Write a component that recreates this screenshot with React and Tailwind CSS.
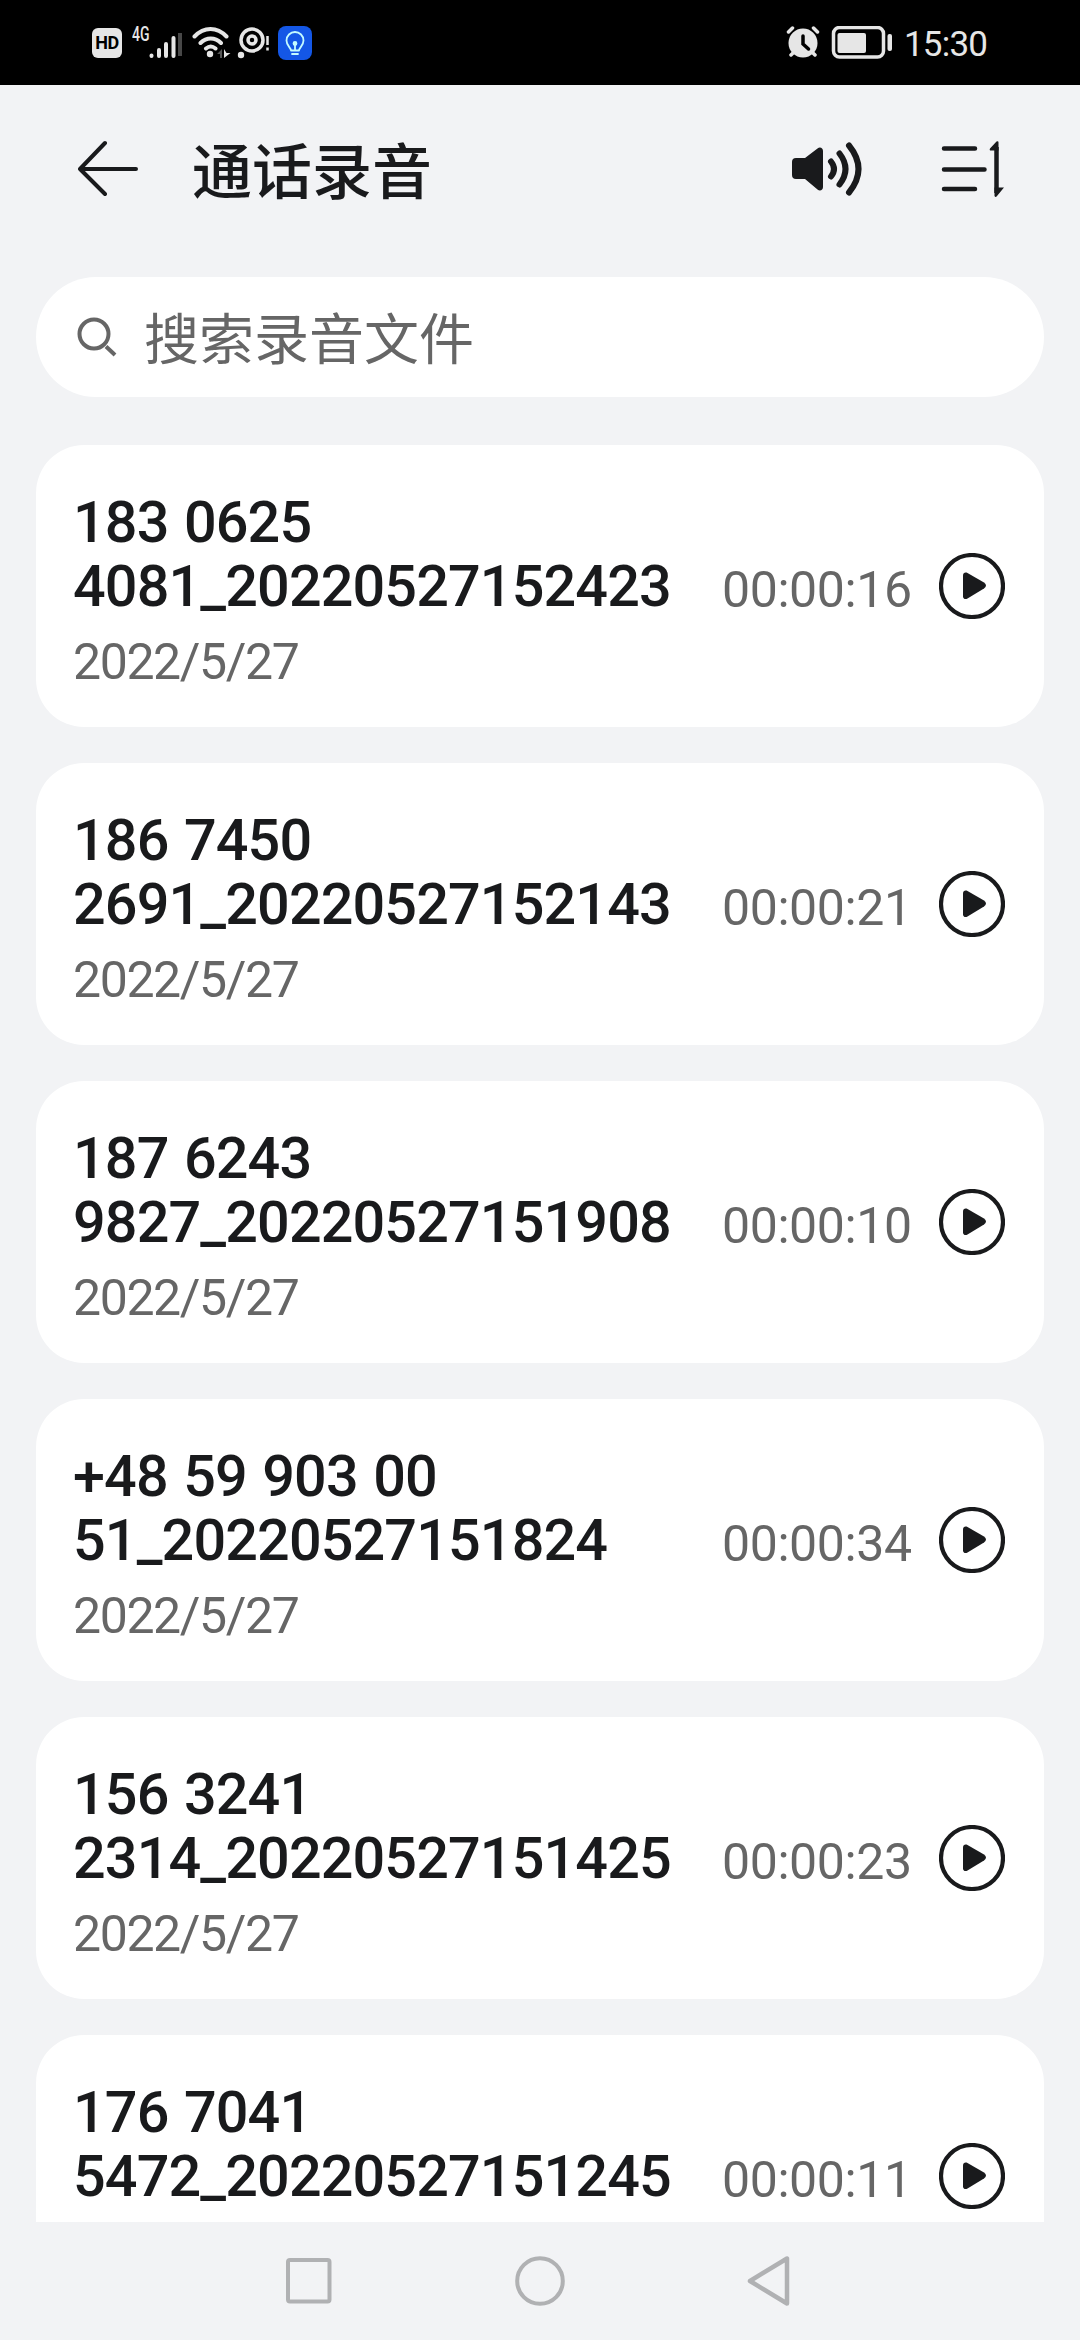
import React from 'react';

const recordings = [
  { id: 1, lines: ['183 0625', '4081_20220527152423'], date: '2022/5/27', duration: '00:00:16' },
  { id: 2, lines: ['186 7450', '2691_20220527152143'], date: '2022/5/27', duration: '00:00:21' },
  { id: 3, lines: ['187 6243', '9827_20220527151908'], date: '2022/5/27', duration: '00:00:10' },
  { id: 4, lines: ['+48 59 903 00', '51_20220527151824'], date: '2022/5/27', duration: '00:00:34' },
  { id: 5, lines: ['156 3241', '2314_20220527151425'], date: '2022/5/27', duration: '00:00:23' },
  { id: 6, lines: ['176 7041', '5472_20220527151245'], date: '', duration: '00:00:11' },
];

const StatusBar = () => (
  <div className="flex h-[85px] shrink-0 items-start justify-between bg-black pr-[90px] pl-[92px] text-[#e6e6e6]">
    <div className="flex pt-[28px]">
      <div className="flex h-[30px] w-[30px] items-center justify-center rounded-[6px] bg-[#e6e6e6] text-[18px] leading-none font-bold tracking-[-0.5px] text-black">
        HD
      </div>
      <span className="-mt-[4px] ml-[10px] w-[16px] origin-left scale-x-[0.7] text-[20px] leading-[20px] font-medium">4G</span>
      {/* Signal strength */}
      <svg className="-mt-[3px] h-[34px] w-[34px]" viewBox="0 0 34 34" fill="none" stroke="currentColor" strokeWidth="4" strokeLinecap="round">
        <path d="M3.500 30.500v0.500M11 25v6M18 19v12M25.500 13v18" />
        <path d="M32 8v23" stroke="#484848" strokeLinecap="butt" />
      </svg>
      {/* Wifi */}
      <svg className="-mt-[3px] ml-[10px] h-[34px] w-[40px]" viewBox="0 0 40 34" fill="none" stroke="currentColor" strokeWidth="4" strokeLinecap="round">
        <path d="M2.500 11.500C12 1.500 25 1.500 34.500 11.500M8.500 18C14.500 12 23 12 29 18M14 23.500c3-2.500 6.500-2.500 9.500 0" />
        <circle cx="18" cy="29" r="3.200" fill="currentColor" stroke="none" />
        <path d="M25 29l5-5v9h-2v-4z" fill="#555" stroke="none" />
        <path d="M32 33v-9l2.500 4h4z" fill="currentColor" stroke="none" />
      </svg>
      <svg className="-mt-[3px] ml-[4px] h-[34px] w-[34px]" viewBox="0 0 34 34" fill="none" stroke="currentColor">
        <circle cx="16" cy="15" r="11" strokeWidth="3.500" />
        <circle cx="16" cy="15" r="4" strokeWidth="3.500" />
        <circle cx="5" cy="30" r="3.200" fill="currentColor" stroke="none" />
        <path d="M31.500 11v9M31.500 22.500v3" strokeWidth="2.500" />
      </svg>
      {/* Bulb app */}
      <div className="-mt-[2px] ml-[8px] flex h-[34px] w-[34px] items-center justify-center rounded-[8px] bg-[#1457e6]">
        <svg className="h-[34px] w-[34px]" viewBox="0 0 34 34" fill="none" stroke="#c4fbff" strokeWidth="1.800" strokeLinecap="round" strokeLinejoin="round">
          <path d="M13 24.500c0-3-4.500-4.500-4.500-10a8.500 8.500 0 0 1 17 0c0 5.500-4.500 7-4.500 10zM14 28h6M17 18v6" />
          <circle cx="17" cy="17.500" r="1.500" fill="#c4fbff" />
        </svg>
      </div>
    </div>
    <div className="flex pt-[26px]">
      <svg className="h-[32px] w-[34px]" viewBox="0 0 34 32" fill="none" stroke="currentColor" strokeLinecap="round">
        <path d="M2.500 6l4-4M31.500 6l-4-4M5 29l5-5M29 29l-5-5" strokeWidth="3.500" />
        <circle cx="17" cy="17" r="14.500" fill="currentColor" stroke="none" />
        <path d="M17 10v8l5.500 5" stroke="#000" strokeWidth="3.500" />
      </svg>
      <svg className="ml-[11px] h-[34px] w-[62px]" viewBox="0 0 62 34" fill="none" stroke="currentColor">
        <rect x="2.500" y="1.500" width="50" height="29.500" rx="6" strokeWidth="3.500" />
        <rect x="6.500" y="7" width="28.500" height="20" rx="2" fill="currentColor" stroke="none" />
        <rect x="56.500" y="8" width="4.500" height="17" rx="2" fill="currentColor" stroke="none" />
      </svg>
      <span className="ml-[11px] w-[86px] text-[35px] leading-[37px] tracking-[-0.8px] whitespace-nowrap">15:30</span>
    </div>
  </div>
);

const Header = () => (
  <header className="flex h-[168px] shrink-0 items-center pr-[75px] pl-[78px]">
    <svg className="h-[60px] w-[60px]" viewBox="0 0 60 60" fill="none" stroke="currentColor" strokeWidth="4" strokeLinecap="round" strokeLinejoin="round">
      <path d="M27 4L2 30l25 25M2 30h56" />
    </svg>
    <h1 className="ml-[54px] flex-1 pt-[9px] text-[60px] leading-[72px] font-medium">通话录音</h1>
    <svg className="h-[60px] w-[72px]" viewBox="0 0 72 60" fill="none" stroke="currentColor" strokeWidth="6" strokeLinecap="round" strokeLinejoin="round">
      <path d="M5 19h9L26.500 9.500C29 7.500 32 9 32 12v36c0 3-3 4.500-5.500 2.500L14 40H5a4 4 0 0 1-4-4V23a4 4 0 0 1 4-4z" fill="currentColor" stroke="none" />
      <path d="M40 22.500q6 7.500 0 15M48.500 14.500q12 15.500 0 31M58 6.500q19 23.500 0 47" />
    </svg>
    <svg className="ml-[76px] h-[60px] w-[66px]" viewBox="0 0 66 60" fill="none" stroke="currentColor" strokeWidth="4.500" strokeLinecap="round">
      <path d="M5 9.500h31M5 30.500h40.500M5 50h31" />
      <path d="M57.500 8v46" strokeLinecap="butt" />
      <path d="M51 9.500l6.500-7q2-1 2 1v8H52q-2 0-1-2zM65 48.500h-9.500V57q1 2 2.500 0z" fill="currentColor" stroke="none" />
    </svg>
  </header>
);

const SearchBox = () => (
  <div className="mx-[36px] mt-[24px] flex h-[120px] shrink-0 items-center rounded-full bg-white pl-[40px] text-[#666666]">
    <svg className="h-[42px] w-[42px]" viewBox="0 0 42 42" fill="none" stroke="currentColor" strokeWidth="4">
      <circle cx="18" cy="18" r="14.500" />
      <path d="M30 30.500l9 8.500" />
    </svg>
    <span className="ml-[26px] pt-[6px] text-[55px] leading-[66px]">搜索录音文件</span>
  </div>
);

const PlayIcon = () => (
  <svg className="h-[66px] w-[66px]" viewBox="0 0 66 66">
    <circle cx="33" cy="33" r="31" fill="none" stroke="currentColor" strokeWidth="4.200" />
    <path d="M24 22.500c0-2.500 2-3.500 4.500-2.500L45 29.500q4 3 0 6L28.500 45.500c-2.500 1.500-4.500 0-4.500-2z" fill="currentColor" />
  </svg>
);

const RecordingCard = ({ recording }) => (
  <li className="flex h-[282px] shrink-0 items-center rounded-[48px] bg-white pr-[39px] pl-[37px]">
    <div className="flex-1 pt-[10px] whitespace-nowrap">
      <div className="text-[57.500px] leading-[64px] font-medium tracking-[-0.85px] [word-spacing:2px]">
        {recording.lines.map((line) => (
          <p key={line}>{line}</p>
        ))}
      </div>
      <p className="mt-[13px] h-[60px] text-[50px] leading-[60px] tracking-[-1.4px] text-[#666666]">{recording.date}</p>
    </div>
    <span className="w-[217px] pt-[7px] text-[50px] leading-[60px] tracking-[-0.4px] text-[#666666]">{recording.duration}</span>
    <PlayIcon />
  </li>
);

const NavBar = () => (
  <nav className="flex h-[118px] shrink-0 items-center justify-center gap-[179px] bg-[#f2f3f5]">
    <svg className="h-[52px] w-[52px]" viewBox="0 0 52 52" fill="none" stroke="#b0b1b3" strokeWidth="4">
      <rect x="5" y="5" width="41.500" height="41.500" rx="2" />
    </svg>
    <svg className="h-[52px] w-[52px]" viewBox="0 0 52 52" fill="none" stroke="#b0b1b3" strokeWidth="4">
      <circle cx="26" cy="26" r="22.800" />
    </svg>
    <svg className="h-[52px] w-[52px]" viewBox="0 0 52 52" fill="none" stroke="#b0b1b3" strokeWidth="4.500" strokeLinejoin="round">
      <path d="M42 3.500v45L5 26z" />
    </svg>
  </nav>
);

export default function App() {
  return (
    <div className="flex h-[2340px] w-[1080px] flex-col overflow-hidden bg-[#f2f3f5] font-[Roboto,'Noto_Sans_CJK_SC',sans-serif] text-[#191a1c]">
      <StatusBar />
      <Header />
      <SearchBox />
      <ul className="mx-[36px] mt-[48px] flex min-h-0 flex-1 flex-col gap-[36px] overflow-hidden">
        {recordings.map((recording) => (
          <RecordingCard key={recording.id} recording={recording} />
        ))}
      </ul>
      <NavBar />
    </div>
  );
}
